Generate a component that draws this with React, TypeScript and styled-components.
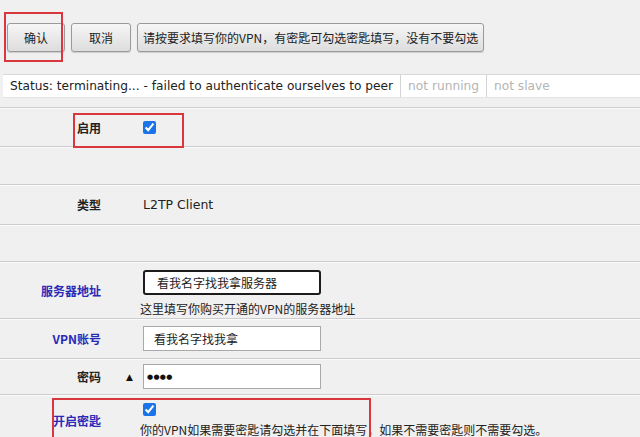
import React, { FC } from 'react';
import styled, { createGlobalStyle } from 'styled-components';

const GlobalStyle = createGlobalStyle`
  html, body {
    margin: 0;
    padding: 0;
    background: #f0f0f0;
    overflow: hidden;
  }
  body {
    font-family: "DejaVu Sans", "Noto Sans CJK SC", sans-serif;
    font-size: 12px;
    color: #222;
  }
`;

const Page = styled.div`
  position: relative;
  width: 640px;
  height: 437px;
  overflow: hidden;
  background: #f0f0f0;
`;

const Toolbar = styled.div`
  display: flex;
  gap: 6px;
  padding: 23px 0 0 7px;
  height: 29px;
`;

const Button = styled.button<{ $w?: number }>`
  height: 29px;
  width: ${(p) => (p.$w ? `${p.$w}px` : 'auto')};
  padding: 0 5px;
  border: 1px solid #9a9a9a;
  border-radius: 3px;
  background: linear-gradient(#f6f6f6, #dddddd);
  font-family: "Noto Sans CJK SC", sans-serif;
  font-size: 12px;
  color: #222;
  box-shadow: 0 1px 1px rgba(0, 0, 0, 0.15);
`;

const StatusBar = styled.div`
  display: flex;
  margin: 22px 0 0 3px;
  height: 22px;
  background: #fff;
  border-top: 1px solid #d8d8d8;
  border-bottom: 1px solid #e4e4e4;
`;

const StatusCell = styled.div<{ $muted?: boolean }>`
  display: flex;
  align-items: center;
  padding: 0 7px;
  font-size: 12.2px;
  white-space: nowrap;
  color: ${(p) => (p.$muted ? '#b4b4b4' : '#222')};
  border-left: ${(p) => (p.$muted ? '1px solid #d4d4d4' : 'none')};
`;

const Table = styled.div`
  margin-top: 9px;
  display: flex;
  flex-direction: column;
`;

const Row = styled.div<{ $h: number }>`
  display: grid;
  grid-template-columns: 101px 42px 1fr;
  height: ${(p) => p.$h}px;
  border-top: 1px solid #cdcdcd;
  box-shadow: inset 0 1px 0 #fafafa;
`;

const Label = styled.div<{ $blue?: boolean }>`
  display: flex;
  align-items: center;
  justify-content: flex-end;
  font-family: "Noto Sans CJK SC", sans-serif;
  font-weight: 700;
  font-size: 12px;
  color: ${(p) => (p.$blue ? '#2a2ab8' : '#222')};
`;

const Marker = styled.div`
  display: flex;
  align-items: center;
  justify-content: flex-end;
  padding-right: 10px;
  font-family: "DejaVu Sans", sans-serif;
  font-size: 9px;
  color: #111;
`;

const Value = styled.div`
  display: flex;
  flex-direction: column;
  justify-content: center;
  align-items: flex-start;
  font-size: 12.5px;
`;

const Stack = styled.div`
  display: flex;
  flex-direction: column;
  align-items: flex-start;
  padding-top: 8px;
`;

const Check = styled.input.attrs({ type: 'checkbox' })`
  margin: 0;
  width: 13px;
  height: 13px;
  accent-color: #1a73e8;
`;

const TextInput = styled.div<{ $focus?: boolean; $pad?: number }>`
  box-sizing: border-box;
  width: 178px;
  height: 25px;
  display: flex;
  align-items: center;
  padding-left: ${(p) => p.$pad ?? (p.$focus ? 12 : 10)}px;
  background: #fff;
  border: ${(p) => (p.$focus ? '2px solid #1c1c1c' : '1px solid #a9a9a9')};
  border-radius: ${(p) => (p.$focus ? '3px' : '0')};
  font-family: "Noto Sans CJK SC", sans-serif;
  font-size: 12px;
  color: #222;
`;

const Help = styled.div`
  margin: 5px 0 0 -3px;
  font-family: "Noto Sans CJK SC", sans-serif;
  font-size: 12px;
  color: #222;
  white-space: nowrap;
`;

const Dots = styled.span`
  font-family: "DejaVu Sans", sans-serif;
  font-size: 7px;
  letter-spacing: 0.3px;
  font-weight: 700;
  color: #111;
`;

const Highlight = styled.div<{ $x: number; $y: number; $w: number; $h: number }>`
  position: absolute;
  left: ${(p) => p.$x}px;
  top: ${(p) => p.$y}px;
  width: ${(p) => p.$w}px;
  height: ${(p) => p.$h}px;
  box-sizing: border-box;
  border: 2px solid #d9363e;
  pointer-events: none;
`;

const App: FC = () => (
  <Page>
    <GlobalStyle />
    <Toolbar>
      <Button $w={58}>确认</Button>
      <Button $w={60}>取消</Button>
      <Button>请按要求填写你的VPN，有密匙可勾选密匙填写，没有不要勾选</Button>
    </Toolbar>
    <StatusBar>
      <StatusCell>Status: terminating... - failed to authenticate ourselves to peer</StatusCell>
      <StatusCell $muted>not running</StatusCell>
      <StatusCell $muted>not slave</StatusCell>
    </StatusBar>
    <Table>
      <Row $h={38}>
        <Label>启用</Label>
        <Marker />
        <Value>
          <Check defaultChecked />
        </Value>
      </Row>
      <Row $h={37} />
      <Row $h={39}>
        <Label>类型</Label>
        <Marker />
        <Value>L2TP Client</Value>
      </Row>
      <Row $h={36} />
      <Row $h={56}>
        <Label $blue>服务器地址</Label>
        <Marker />
        <Stack>
          <TextInput $focus>看我名字找我拿服务器</TextInput>
          <Help>这里填写你购买开通的VPN的服务器地址</Help>
        </Stack>
      </Row>
      <Row $h={39}>
        <Label $blue>VPN账号</Label>
        <Marker />
        <Value>
          <TextInput>看我名字找我拿</TextInput>
        </Value>
      </Row>
      <Row $h={35}>
        <Label>密码</Label>
        <Marker>▲</Marker>
        <Value>
          <TextInput $pad={3}>
            <Dots>●●●●</Dots>
          </TextInput>
        </Value>
      </Row>
      <Row $h={50}>
        <Label $blue>开启密匙</Label>
        <Marker />
        <Stack>
          <Check defaultChecked />
          <Help>你的VPN如果需要密匙请勾选并在下面填写，如果不需要密匙则不需要勾选。</Help>
        </Stack>
      </Row>
    </Table>
    <Highlight $x={4} $y={12} $w={59} $h={50} />
    <Highlight $x={73} $y={113} $w={111} $h={35} />
    <Highlight $x={52} $y={398} $w={319} $h={60} />
  </Page>
);

export default App;
